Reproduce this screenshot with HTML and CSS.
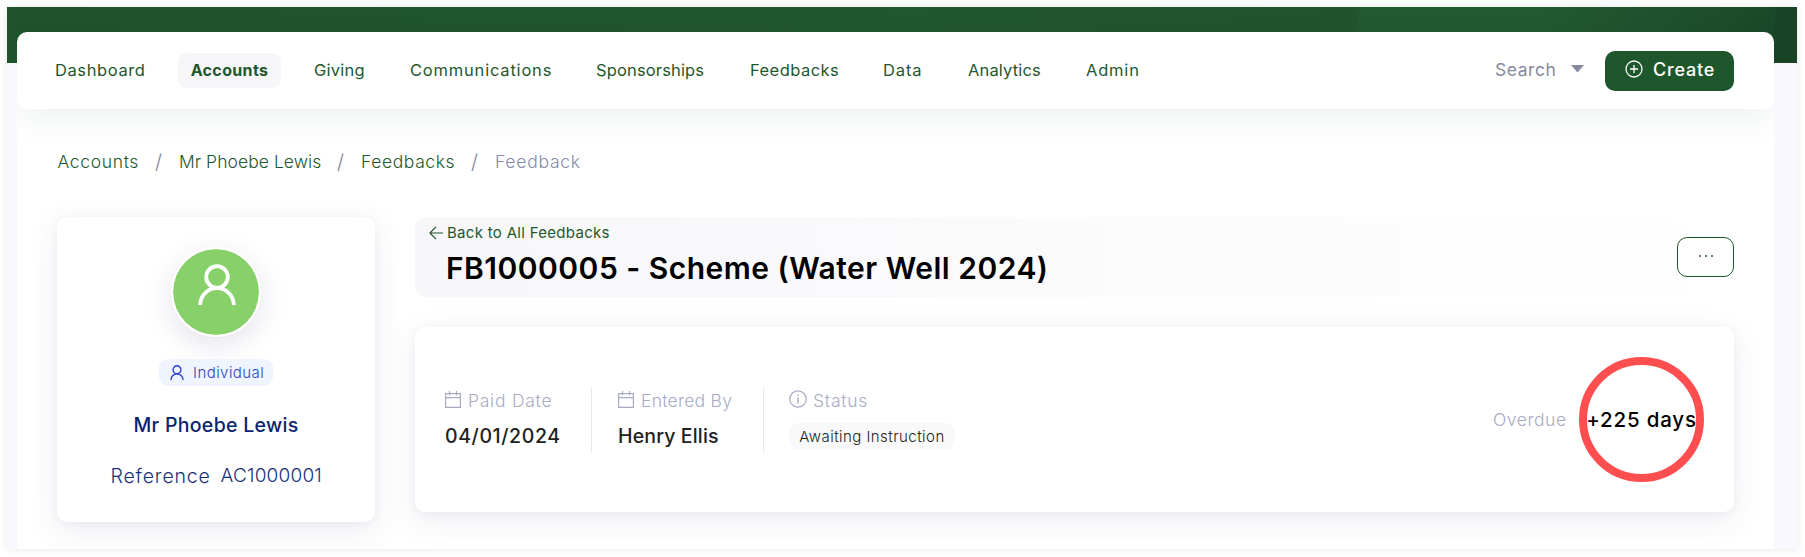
FILE: index.html
```html
<!DOCTYPE html>
<html lang="en">
<head>
<meta charset="utf-8">
<title>Feedback FB1000005</title>
<link rel="stylesheet" href="styles.css">
</head>
<body>
<svg width="0" height="0" class="defs" aria-hidden="true">
  <symbol id="person" viewBox="0 0 38 41"><circle cx="19" cy="13" r="10.8" fill="none" stroke="currentColor" stroke-width="3.8"/><path d="M2.2 41a16.8 16.8 0 0 1 33.6 0" fill="none" stroke="currentColor" stroke-width="3.8"/></symbol>
  <symbol id="calendar" viewBox="0 0 16 17"><path d="M.6 2.6h14.8v13.8H.6zM.6 6.6h14.8M4.5 0v4.2M11.5 0v4.2" fill="none" stroke="currentColor" stroke-width="1.2"/></symbol>
</svg>
<div class="shell">
  <div class="band"></div>
  <div class="page">
    <header class="topbar">
      <nav class="menu">
        <a class="i-dash">Dashboard</a>
        <a class="active">Accounts</a>
        <a class="i-giv">Giving</a>
        <a class="i-com">Communications</a>
        <a class="i-spo">Sponsorships</a>
        <a class="i-fee">Feedbacks</a>
        <a class="i-dat">Data</a>
        <a class="i-ana">Analytics</a>
        <a class="i-adm">Admin</a>
      </nav>
      <div class="search"><span>Search</span><svg width="13" height="8"><path d="M0 0h13L6.5 7.5z" fill="#868aa0"/></svg></div>
      <button class="create"><svg width="18" height="18" viewBox="0 0 18 18" fill="none" stroke="#fff" stroke-width="1.3"><circle cx="9" cy="9" r="8"/><path d="M9 5v8M5 9h8"/></svg><span>Create</span></button>
    </header>

    <div class="crumbs">
      <a class="c1">Accounts</a><i>/</i><a class="c2">Mr Phoebe Lewis</a><i>/</i><a class="c3">Feedbacks</a><i>/</i><span class="c4">Feedback</span>
    </div>

    <main class="content">
      <aside class="profile">
        <div class="avatar"><svg width="38" height="41"><use href="#person"/></svg></div>
        <div class="badge"><svg width="14" height="15"><use href="#person"/></svg><span>Individual</span></div>
        <h2>Mr Phoebe Lewis</h2>
        <p class="ref"><span class="ref-label">Reference</span><span class="ref-value">AC1000001</span></p>
      </aside>

      <section class="main">
        <div class="titlebar">
          <div class="headline">
            <a class="back"><svg width="14" height="14" viewBox="0 0 14 14" fill="none" stroke="#1f572d" stroke-width="1.2"><path d="M14 7H1M7 .8.9 7 7 13.2"/></svg><span>Back to All Feedbacks</span></a>
            <h1>FB1000005 - Scheme (Water Well 2024)</h1>
          </div>
          <button class="more"><b></b><b></b><b></b></button>
        </div>

        <div class="details">
          <div class="field f1">
            <div class="label"><svg width="16" height="17"><use href="#calendar"/></svg><span class="l1">Paid Date</span></div>
            <div class="value v1">04/01/2024</div>
          </div>
          <div class="field f2">
            <div class="label"><svg width="16" height="17"><use href="#calendar"/></svg><span class="l2">Entered By</span></div>
            <div class="value v2">Henry Ellis</div>
          </div>
          <div class="field f3">
            <div class="label"><svg width="18" height="18" viewBox="0 0 18 18" fill="none" stroke="currentColor" stroke-width="1.2"><circle cx="9" cy="9" r="8.2"/><path d="M9 7.4v6M9 4.4v1.5" stroke-width="1.5"/></svg><span class="l3">Status</span></div>
            <div class="pill">Awaiting Instruction</div>
          </div>
          <div class="overdue">Overdue</div>
          <div class="ring"><span>+225 days</span></div>
        </div>
      </section>
    </main>
  </div>
</div>
</body>
</html>
```
FILE: styles.css
```css
* { box-sizing: border-box; }
body { margin: 0; padding: 7px; width: 1805px; height: 557px; overflow: hidden; background: #fff; font-family: Inter, "Open Sans", sans-serif; color: #1f572d; }
svg { display: block; flex: none; }
.defs { position: absolute; }
button { font: inherit; padding: 0; }
h1, h2, p { margin: 0; }
a, span, h1, h2, .value, .overdue, .pill { white-space: nowrap; }

.shell { position: relative; width: 1790px; height: 542px; background: #f9f8fe; box-shadow: 0 0 8px rgba(0,0,0,.1); }
.band { position: absolute; left: 0; top: 0; width: 1790px; height: 56px; background: linear-gradient(98deg, #1f542b 0, #21572f 50%, #20542d 75.2%, #225a30 75.3%, #225a30 85%, #1d4c2a 96%, #1b4828 98.4%, #184325 98.5%, #184325 100%); }
.page { position: relative; margin-left: 10px; width: 1757px; height: 542px; padding-top: 25px; overflow: hidden; }
.page::before { content: ""; position: absolute; inset: 56px 0 0; background: #fff; }

.topbar { position: relative; display: flex; align-items: center; height: 77px; padding: 0 40px 0 24px; background: #fff; border-radius: 10px; box-shadow: 0 10px 30px rgba(30,50,70,.07); }
.menu { display: grid; grid-template-columns: 137px 122px 96px 186px 154px 133px 85px 118px 70px; align-items: center; height: 35px; font-size: 16.5px; line-height: 35px; }
.menu a { padding-left: 14px; }
.menu .active { width: 103px; padding: 0; text-align: center; font-size: 16px; font-weight: 700; letter-spacing: .35px; border-radius: 9px; background: #f6f6f9; }
.i-dash { letter-spacing: .6px; }
.i-giv { letter-spacing: .25px; }
.i-com { letter-spacing: .8px; }
.i-spo { letter-spacing: .15px; }
.i-fee { letter-spacing: .45px; }
.i-dat { letter-spacing: .9px; }
.i-ana { letter-spacing: .15px; }
.i-adm { letter-spacing: .8px; }
.search { display: flex; align-items: center; gap: 15px; width: 110px; margin-left: auto; font-size: 17.5px; line-height: 24px; color: #868aa0; letter-spacing: .55px; }
.search span { width: 61px; margin-top: -1px; }
.search svg { margin-top: -3px; }
.create { display: flex; align-items: center; gap: 10px; width: 129px; height: 40px; padding-left: 20px; border: 0; border-radius: 10px; background: #1f572d; color: #fff; font-size: 18px; font-weight: 500; letter-spacing: .8px; }
.create svg { margin-top: -4px; }
.create span { margin-top: -2px; }

.crumbs { position: relative; display: flex; margin: 39px 0 0 40.5px; height: 28px; line-height: 28px; font-size: 17.5px; font-weight: 300; }
.crumbs i { font-style: normal; width: 41px; text-align: center; font-size: 20px; color: #7c8194; }
.crumbs span { color: #868aa8; }
.c1 { width: 80.5px; letter-spacing: .65px; }
.c2 { width: 141px; letter-spacing: .05px; }
.c3 { width: 93px; letter-spacing: .6px; }
.c4 { letter-spacing: .75px; }

.content { position: relative; display: flex; gap: 40px; margin: 41px 40px 0; }
.profile { display: flex; flex-direction: column; align-items: center; width: 318px; height: 305px; padding-top: 30px; border-radius: 10px; background: #fff; box-shadow: 0 8px 32px rgba(40,60,110,.09), 0 2px 8px rgba(40,60,110,.05); }
.avatar { display: flex; justify-content: center; width: 90px; height: 90px; padding-top: 15px; border: 2px solid #fff; border-radius: 50%; background: #88d16a; background-clip: padding-box; color: #fff; box-shadow: 0 8px 28px rgba(50,30,90,.13); }
.avatar svg { margin-left: 1px; }
.badge { display: flex; align-items: center; gap: 9px; width: 114px; height: 27px; margin-top: 22px; padding-left: 11px; border-radius: 9px; background: #eff4ff; color: #2b3fc7; font-size: 15px; font-weight: 300; letter-spacing: .45px; }
.profile h2 { margin-top: 26px; color: #0b246f; font-size: 19.5px; font-weight: 500; line-height: 26px; letter-spacing: .3px; }
.ref { display: flex; gap: 11px; width: 211px; margin-top: 25px; color: #193078; font-size: 19px; font-weight: 300; line-height: 26px; }
.ref-label { width: 99px; font-size: 19.5px; letter-spacing: .85px; }
.ref-value { letter-spacing: .2px; }

.main { width: 1319px; }
.titlebar { display: flex; align-items: center; justify-content: space-between; height: 80px; border-radius: 10px; background: linear-gradient(90deg, #f7f7fa, #fff); }
.headline { height: 80px; padding-top: 5px; }
.back { display: flex; align-items: center; gap: 4px; height: 21px; margin-left: 14px; font-size: 15px; letter-spacing: .3px; }
h1 { margin: 6px 0 0 31px; color: #000; font-size: 30px; line-height: 38px; font-weight: 600; letter-spacing: .48px; }
.more { display: flex; justify-content: center; gap: 4px; width: 57px; height: 40px; padding-top: 17px; border: 1px solid #1f572d; border-radius: 10px; background: #fff; }
.more b { width: 2px; height: 2px; border-radius: 1px; background: #1f572d; }

.details { display: flex; align-items: center; height: 185px; margin-top: 30px; padding: 0 30px; border-radius: 10px; background: #fff; box-shadow: 0 8px 32px rgba(40,60,110,.09), 0 2px 8px rgba(40,60,110,.05); }
.field { height: 65px; }
.f1 { width: 147px; border-right: 1px solid #e7e7ec; }
.f2 { width: 172px; padding-left: 26px; border-right: 1px solid #e7e7ec; }
.f3 { padding-left: 25px; }
.label { display: flex; align-items: center; gap: 7px; height: 24px; color: #a9abc5; font-size: 17.5px; font-weight: 300; }
.label span { padding-top: 2px; }
.f3 .label { gap: 6px; }
.l1, .l3 { letter-spacing: .75px; }
.l2 { letter-spacing: .25px; }
.value { margin-top: 11px; line-height: 28px; color: #212121; font-size: 19.5px; font-weight: 500; }
.v1 { letter-spacing: .6px; }
.v2 { letter-spacing: .15px; }
.pill { width: 166px; height: 27px; margin-top: 12px; border-radius: 9px; background: #f9f9f9; color: #222; text-align: center; font-size: 15px; font-weight: 300; line-height: 27px; letter-spacing: .45px; }
.overdue { width: 74px; margin: 0 12px 0 auto; color: #a9abc5; font-size: 17.5px; font-weight: 300; letter-spacing: .55px; }
.ring { display: flex; align-items: center; justify-content: center; width: 125px; height: 125px; border: 8px solid #ff4e50; border-radius: 50%; color: #000; font-size: 20.5px; font-weight: 500; letter-spacing: .8px; }
```
